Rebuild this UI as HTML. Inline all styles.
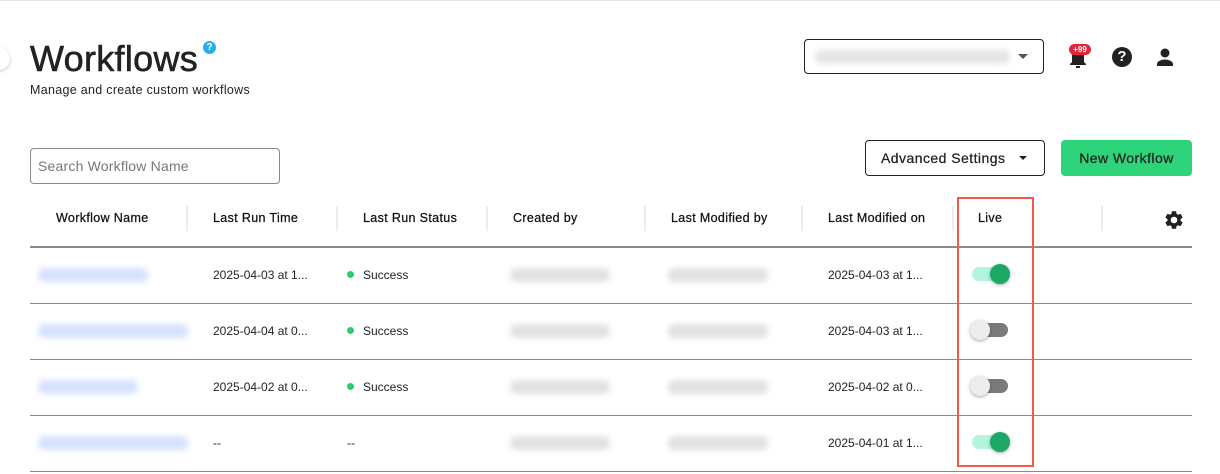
<!DOCTYPE html>
<html><head><style>
*{margin:0;padding:0;box-sizing:border-box}
body{width:1220px;height:474px;background:#fff;font-family:"Liberation Sans",sans-serif;color:#222;position:relative;overflow:hidden}
.a{position:absolute}
.t{font-size:12px;color:#222;white-space:nowrap}
.h{font-size:12.5px;color:#111;white-space:nowrap;letter-spacing:.35px;-webkit-text-stroke:.25px #111}
.sep{position:absolute;top:206px;width:2px;height:25px;background:#ececec}
.line{position:absolute;left:30px;width:1162px;height:1px;background:#8a8a8a}
.blur{position:absolute;height:14px;border-radius:6px;filter:blur(3px)}
.dot{display:inline-block;width:7px;height:7px;border-radius:50%;background:#2ecc71;margin-right:9px;vertical-align:1px}
.tog{position:absolute;width:36px;height:14px;border-radius:7px}
.knob{position:absolute;top:-3px;width:20px;height:20px;border-radius:50%;box-shadow:0 1px 3px rgba(0,0,0,.35)}
</style></head><body>
<div class="a" style="left:0;top:0;width:1220px;height:1px;background:#e4e4e4"></div>
<div class="a" style="left:-12px;top:48px;width:22px;height:22px;border-radius:50%;background:#fff;box-shadow:0 1px 3px rgba(0,0,0,.25)"></div>
<div class="a" style="left:30px;top:38px;font-size:36px;color:#222;letter-spacing:.3px;-webkit-text-stroke:.6px #222">Workflows</div>
<div class="a" style="left:203px;top:41px;width:13px;height:13px;border-radius:50%;background:#29b0ea;color:#fff;font-size:10px;font-weight:bold;text-align:center;line-height:13px">?</div>
<div class="a t" style="left:30px;top:83px;font-size:12.5px;letter-spacing:.3px">Manage and create custom workflows</div>

<div class="a" style="left:804px;top:39px;width:240px;height:35px;border:1.5px solid #222;border-radius:4px"></div>
<div class="blur" style="left:815px;top:50px;width:195px;background:#e6e6e6"></div>
<div class="a" style="left:1018px;top:54px;width:0;height:0;border-left:5px solid transparent;border-right:5px solid transparent;border-top:5px solid #555"></div>
<svg class="a" style="left:1068px;top:48px" width="20" height="22" viewBox="0 0 20 22"><path d="M4 8a6 6 0 0 1 12 0v6l2 2v1H2v-1l2-2z" fill="#222"/><rect x="8" y="18" width="4" height="2" fill="#222"/></svg>
<div class="a" style="left:1069px;top:44px;width:22px;height:11px;border-radius:6px;background:#e0243a;color:#fff;font-size:8px;font-weight:bold;text-align:center;line-height:11px">+99</div>
<div class="a" style="left:1112px;top:47px;width:20px;height:20px;border-radius:50%;background:#222;color:#fff;font-size:15px;font-weight:bold;text-align:center;line-height:20px">?</div>
<svg class="a" style="left:1156px;top:47px" width="18" height="20" viewBox="0 0 18 20"><circle cx="9" cy="6" r="4.5" fill="#222"/><path d="M1 19v-2c0-3 5-4.5 8-4.5s8 1.5 8 4.5v2z" fill="#222"/></svg>

<div class="a" style="left:30px;top:148px;width:250px;height:36px;border:1px solid #888;border-radius:4px"></div>
<div class="a" style="left:38px;top:158px;font-size:14px;color:#777;letter-spacing:.2px">Search Workflow Name</div>

<div class="a" style="left:865px;top:140px;width:180px;height:36px;border:1.5px solid #222;border-radius:4px"></div>
<div class="a" style="left:881px;top:150px;font-size:14px;color:#222;letter-spacing:.45px;-webkit-text-stroke:.25px #222">Advanced Settings</div>
<div class="a" style="left:1019px;top:156px;width:0;height:0;border-left:4px solid transparent;border-right:4px solid transparent;border-top:4px solid #222"></div>
<div class="a" style="left:1061px;top:140px;width:131px;height:36px;background:#2ed47a;border-radius:4px;font-size:14px;color:#222;text-align:center;line-height:36px;letter-spacing:.45px;-webkit-text-stroke:.25px #222">New Workflow</div>

<div class="a h" style="left:56px;top:211px">Workflow Name</div>
<div class="a h" style="left:213px;top:211px">Last Run Time</div>
<div class="a h" style="left:363px;top:211px">Last Run Status</div>
<div class="a h" style="left:513px;top:211px">Created by</div>
<div class="a h" style="left:671px;top:211px">Last Modified by</div>
<div class="a h" style="left:828px;top:211px">Last Modified on</div>
<div class="a h" style="left:978px;top:211px">Live</div>
<div class="sep" style="left:186px"></div><div class="sep" style="left:336px"></div><div class="sep" style="left:486px"></div><div class="sep" style="left:644px"></div><div class="sep" style="left:801px"></div><div class="sep" style="left:952px"></div><div class="sep" style="left:1101px"></div>
<svg class="a" style="left:1163px;top:209px" width="22" height="22" viewBox="0 0 24 24"><path fill="#222" d="M19.14 12.94c.04-.3.06-.61.06-.94 0-.32-.02-.64-.07-.94l2.03-1.58a.49.49 0 0 0 .12-.61l-1.920-3.32a.49.49 0 0 0-.59-.22l-2.39.96c-.5-.38-1.03-.7-1.62-.94l-.36-2.54a.48.48 0 0 0-.48-.41h-3.84a.48.48 0 0 0-.47.41l-.36 2.54c-.59.24-1.13.57-1.62.94l-2.39-.96a.49.49 0 0 0-.59.22L2.74 8.87c-.12.21-.08.47.12.61l2.03 1.58c-.05.3-.09.63-.09.94s.2.64.07.94l-2.03 1.58a.49.49 0 0 0-.12.61l1.92 3.32c.12.22.37.29.59.22l2.39-.96c.5.38 1.03.7 1.62.94l.36 2.54c.05.24.24.41.48.41h3.840c.24 0 .44-.17.47-.41l.36-2.54c.59-.24 1.13-.56 1.62-.94l2.39.96c.22.08.47 0 .59-.22l1.92-3.32c.12-.22.07-.47-.12-.61zM12 15.6A3.6 3.6 0 1 1 12 8.4a3.6 3.6 0 0 1 0 7.2z"/></svg>

<div class="line" style="top:246px;height:2px"></div>
<div class="line" style="top:303px"></div>
<div class="line" style="top:359px"></div>
<div class="line" style="top:415px"></div>
<div class="line" style="top:471px"></div>

<div class="blur" style="left:38px;top:268px;width:110px;background:#d6e2fb"></div>
<div class="blur" style="left:38px;top:324px;width:150px;background:#d6e2fb"></div>
<div class="blur" style="left:38px;top:380px;width:100px;background:#d6e2fb"></div>
<div class="blur" style="left:38px;top:436px;width:150px;background:#d6e2fb"></div>

<div class="a t" style="left:213px;top:268px">2025-04-03 at 1...</div>
<div class="a t" style="left:213px;top:324px">2025-04-04 at 0...</div>
<div class="a t" style="left:213px;top:380px">2025-04-02 at 0...</div>
<div class="a t" style="left:213px;top:436px">--</div>

<div class="a t" style="left:347px;top:268px"><span class="dot"></span>Success</div>
<div class="a t" style="left:347px;top:324px"><span class="dot"></span>Success</div>
<div class="a t" style="left:347px;top:380px"><span class="dot"></span>Success</div>
<div class="a t" style="left:347px;top:436px">--</div>

<div class="blur" style="left:510px;top:268px;width:100px;background:#e2e2e2"></div>
<div class="blur" style="left:510px;top:324px;width:100px;background:#e2e2e2"></div>
<div class="blur" style="left:510px;top:380px;width:100px;background:#e2e2e2"></div>
<div class="blur" style="left:510px;top:436px;width:100px;background:#e2e2e2"></div>
<div class="blur" style="left:668px;top:268px;width:100px;background:#e2e2e2"></div>
<div class="blur" style="left:668px;top:324px;width:100px;background:#e2e2e2"></div>
<div class="blur" style="left:668px;top:380px;width:100px;background:#e2e2e2"></div>
<div class="blur" style="left:668px;top:436px;width:100px;background:#e2e2e2"></div>

<div class="a t" style="left:828px;top:268px">2025-04-03 at 1...</div>
<div class="a t" style="left:828px;top:324px">2025-04-03 at 1...</div>
<div class="a t" style="left:828px;top:380px">2025-04-02 at 0...</div>
<div class="a t" style="left:828px;top:436px">2025-04-01 at 1...</div>

<div class="tog" style="left:972px;top:267px;background:#b3f5dc"><div class="knob" style="left:18px;background:#1ea866"></div></div>
<div class="tog" style="left:972px;top:323px;background:#7a7a7a"><div class="knob" style="left:-2px;background:#ececec"></div></div>
<div class="tog" style="left:972px;top:379px;background:#7a7a7a"><div class="knob" style="left:-2px;background:#ececec"></div></div>
<div class="tog" style="left:972px;top:435px;background:#b3f5dc"><div class="knob" style="left:18px;background:#1ea866"></div></div>

<div class="a" style="left:957px;top:197px;width:77px;height:270px;border:2px solid #f15a4a"></div>
</body></html>
